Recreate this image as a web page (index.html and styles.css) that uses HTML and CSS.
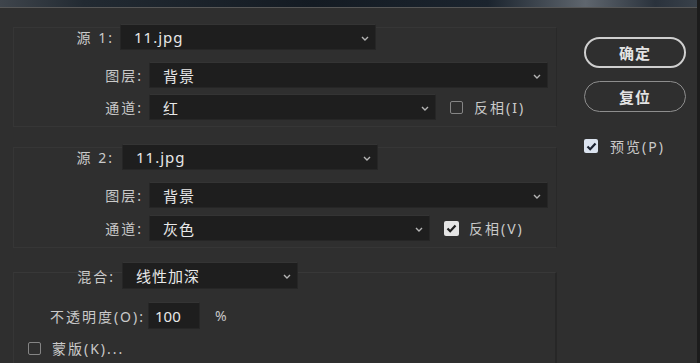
FILE: index.html
```html
<!DOCTYPE html>
<html lang="zh-CN">
<head>
<meta charset="utf-8">
<title>计算</title>
<link rel="stylesheet" href="styles.css">
</head>
<body>
<div class="dialog">
  <div class="titlebar"></div>
  <div class="content">
    <div class="left">
      <section class="group g1">
        <div class="row src">
          <span class="lbl w-src">源 1:</span>
          <div class="select s-src"><span>11.jpg</span><svg class="chev" width="8" height="5" viewBox="0 0 8 5"><polyline points="1,1 4,4 7,1" fill="none" stroke="#b5b5b5" stroke-width="1.4"/></svg></div>
        </div>
        <div class="row layer">
          <span class="lbl w-sub">图层:</span>
          <div class="select s-wide"><span>背景</span><svg class="chev" width="8" height="5" viewBox="0 0 8 5"><polyline points="1,1 4,4 7,1" fill="none" stroke="#b5b5b5" stroke-width="1.4"/></svg></div>
        </div>
        <div class="row chan">
          <span class="lbl w-sub">通道:</span>
          <div class="select s-chan1"><span>红</span><svg class="chev" width="8" height="5" viewBox="0 0 8 5"><polyline points="1,1 4,4 7,1" fill="none" stroke="#b5b5b5" stroke-width="1.4"/></svg></div>
          <label class="check inv1"><span class="box"></span><span class="ctext">反相(I)</span></label>
        </div>
      </section>

      <section class="group g2">
        <div class="row src">
          <span class="lbl w-src">源 2:</span>
          <div class="select s-src s-src2"><span>11.jpg</span><svg class="chev" width="8" height="5" viewBox="0 0 8 5"><polyline points="1,1 4,4 7,1" fill="none" stroke="#b5b5b5" stroke-width="1.4"/></svg></div>
        </div>
        <div class="row layer">
          <span class="lbl w-sub">图层:</span>
          <div class="select s-wide"><span>背景</span><svg class="chev" width="8" height="5" viewBox="0 0 8 5"><polyline points="1,1 4,4 7,1" fill="none" stroke="#b5b5b5" stroke-width="1.4"/></svg></div>
        </div>
        <div class="row chan2">
          <span class="lbl w-sub">通道:</span>
          <div class="select s-chan2"><span>灰色</span><svg class="chev" width="8" height="5" viewBox="0 0 8 5"><polyline points="1,1 4,4 7,1" fill="none" stroke="#b5b5b5" stroke-width="1.4"/></svg></div>
          <label class="check inv2"><span class="box checked"><svg width="11" height="9" viewBox="0 0 11 9"><polyline points="1.5,4.5 4.2,7.2 9.5,1.5" fill="none" stroke="#1e1e1e" stroke-width="2.2"/></svg></span><span class="ctext">反相(V)</span></label>
        </div>
      </section>

      <section class="group g3">
        <div class="row mix">
          <span class="lbl w-mix">混合:</span>
          <div class="select s-mix"><span>线性加深</span><svg class="chev" width="8" height="5" viewBox="0 0 8 5"><polyline points="1,1 4,4 7,1" fill="none" stroke="#b5b5b5" stroke-width="1.4"/></svg></div>
        </div>
        <div class="row opac">
          <span class="lbl w-op">不透明度(O):</span>
          <div class="input">100</div>
          <span class="pct">%</span>
        </div>
        <div class="row mask">
          <label class="check"><span class="box"></span><span class="ctext">蒙版(K)...</span></label>
        </div>
      </section>
    </div>

    <div class="right">
      <button class="btn primary">确定</button>
      <button class="btn">复位</button>
      <label class="check preview"><span class="box checked blue"><svg width="11" height="9" viewBox="0 0 11 9"><polyline points="1.5,4.5 4.2,7.2 9.5,1.5" fill="none" stroke="#1b2230" stroke-width="2.2"/></svg></span><span class="ctext">预览(P)</span></label>
    </div>
  </div>
</div>
</body>
</html>
```

FILE: styles.css
```css
* { box-sizing: border-box; }

html, body {
  margin: 0;
  padding: 0;
  background: #1c1c1c;
}

body {
  width: 700px;
  height: 363px;
  overflow: hidden;
  font-family: "Noto Sans", "Noto Sans CJK SC", sans-serif;
  font-size: 14px;
  color: #c8c8c8;
}

.dialog {
  width: 697px;
  height: 363px;
  background: #2f2f2f;
  overflow: hidden;
}

.titlebar {
  height: 8px;
  background: linear-gradient(90deg, #3f454c 0%, #222a32 12%, #141b23 45%, #1b242e 70%, #5f666e 84%, #2a323c 94%, #39414a 100%);
  border-bottom: 1px solid #575757;
}

.content {
  display: flex;
  align-items: flex-start;
}

.left {
  width: 557px;
  padding-left: 13px;
}

.group {
  border: 1px solid #363636;
  border-right-color: #292929;
}

.g1 {
  margin-top: 19px;
  padding-bottom: 6px;
}

.g2 {
  margin-top: 20px;
  padding-bottom: 6px;
}

.g3 {
  margin-top: 24px;
  height: 120px;
  border-bottom: none;
  border-right: 2px solid #272727;
  border-top-color: #383838;
}

.row {
  display: flex;
  align-items: center;
}

.src { margin-top: -4px; }
.layer { margin-top: 12px; }
.chan { margin-top: 6px; }
.chan2 { margin-top: 7px; }
.mix { margin-top: -11px; }
.opac { margin-top: 13px; }
.mask { margin-top: 9px; height: 20px; padding-left: 14px; }

.lbl {
  text-align: right;
  color: #cacaca;
  white-space: nowrap;
  letter-spacing: 2px;
}

.w-src { width: 100px; margin-right: 6px; }
.w-mix { width: 101px; margin-right: 7px; }
.w-sub { width: 129px; margin-right: 6px; }
.w-op { width: 131px; margin-right: 3px; }

.select {
  height: 26px;
  background: #1e1e1e;
  border: 1px solid #262626;
  border-top-color: #343434;
  display: flex;
  align-items: center;
  justify-content: space-between;
  padding: 0 6px 0 13px;
  color: #e8e8e8;
  font-size: 15px;
  letter-spacing: 1px;
}

.chev { flex: none; margin-top: 2px; }

.s-src { width: 256px; }
.s-src2 { margin-left: 2px; }
.s-wide { width: 399px; }
.s-chan1 { width: 287px; }
.s-chan2 { width: 281px; }
.s-mix { width: 176px; height: 27px; }

.input {
  width: 52px;
  height: 27px;
  background: #1e1e1e;
  border: 1px solid #262626;
  border-top-color: #343434;
  color: #e8e8e8;
  font-size: 15px;
  padding-left: 6px;
  display: flex;
  align-items: center;
}

.pct {
  margin-left: 15px;
  color: #c8c8c8;
}

.check {
  display: flex;
  align-items: center;
  color: #cacaca;
  white-space: nowrap;
}

.box {
  width: 13px;
  height: 13px;
  border: 1.5px solid #858585;
  border-radius: 2px;
  display: flex;
  align-items: center;
  justify-content: center;
  flex: none;
}

.box.checked {
  width: 15px;
  height: 15px;
  background: #e4e4e4;
  border: none;
}

.box.blue { background: #dbe3ef; width: 14px; height: 14px; }

.ctext { margin-left: 11px; letter-spacing: 2px; }

.inv1 { margin-left: 14px; }
.inv2 { margin-left: 14px; }
.inv2 .ctext { margin-left: 10px; }

.right {
  margin-left: 27px;
  width: 102px;
  display: flex;
  flex-direction: column;
  align-items: flex-start;
}

.btn {
  width: 102px;
  height: 31px;
  border-radius: 16px;
  background: transparent;
  border: 1.5px solid #8e8e8e;
  color: #e4e4e4;
  font-family: "Noto Sans CJK SC", sans-serif;
  font-size: 15px;
  font-weight: 700;
  letter-spacing: 1px;
  padding: 0;
  margin-top: 13px;
}

.btn.primary {
  margin-top: 29px;
  border: 2px solid #cfcfcf;
}

.preview {
  margin-top: 24px;
}

.preview .ctext { margin-left: 12px; }
```
